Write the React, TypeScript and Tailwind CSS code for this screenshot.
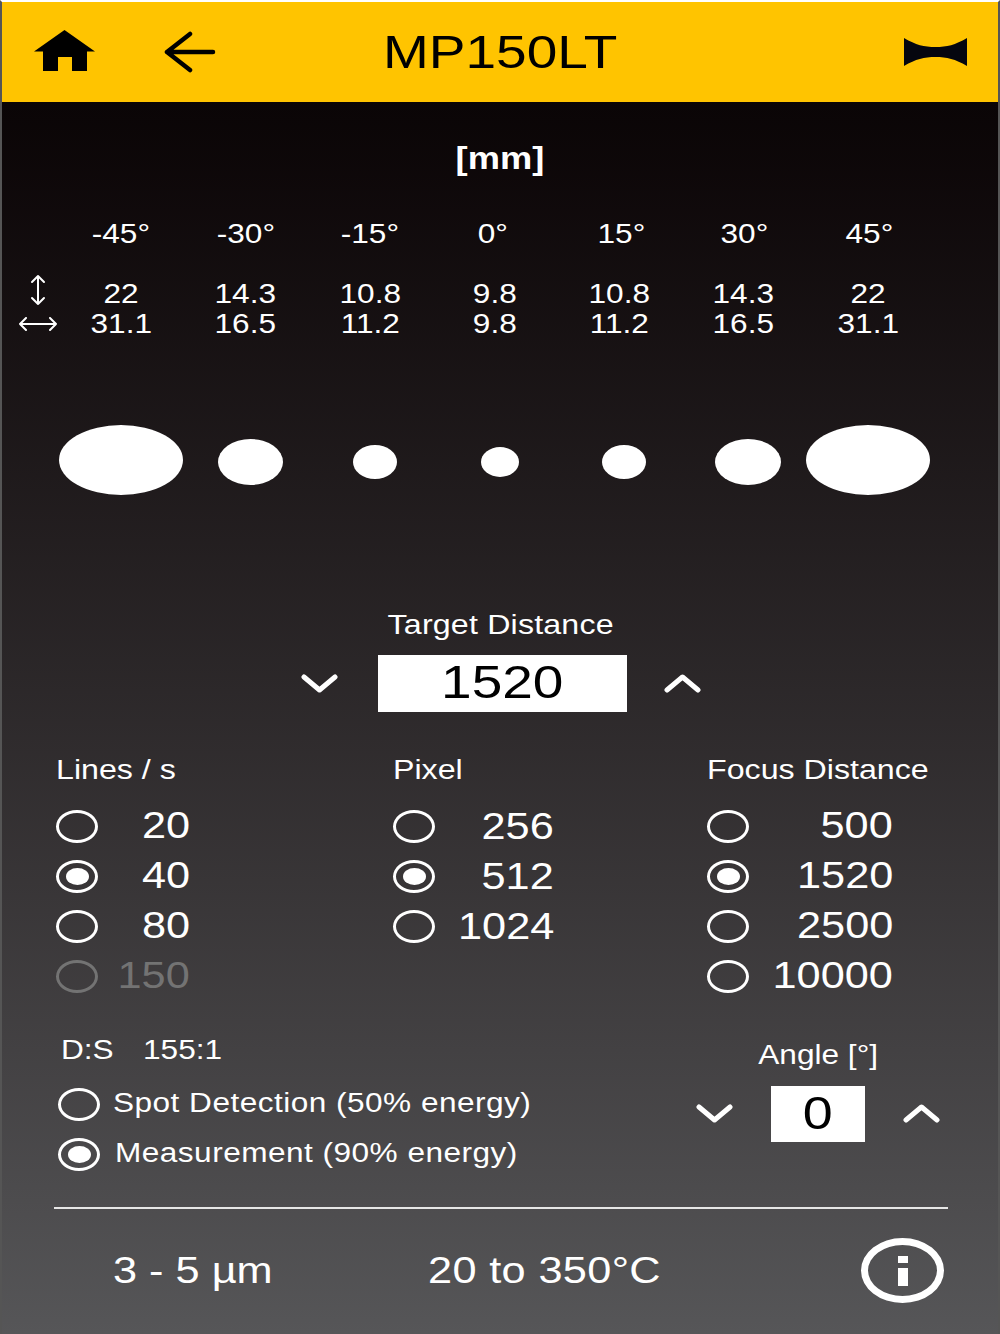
import type { ReactNode } from 'react'

const font = 'font-["Liberation_Sans",Arial,sans-serif]'

function Txt({ children, className = '' }: { children: ReactNode; className?: string }) {
  return <span className={`inline-block whitespace-nowrap scale-x-[1.17] ${className}`}>{children}</span>
}

function Radio({ checked, disabled }: { checked?: boolean; disabled?: boolean }) {
  return (
    <span
      className={`flex h-[33px] w-[42px] shrink-0 items-center justify-center rounded-[50%] border-[3.5px] ${
        disabled ? 'border-[#737373]' : 'border-white'
      }`}
    >
      {checked && <span className="h-[17px] w-[23px] rounded-[50%] bg-white" />}
    </span>
  )
}

function Chevron({ up }: { up?: boolean }) {
  return (
    <svg width="37" height="20" viewBox="0 0 37 20" className="shrink-0">
      <polyline
        points={up ? '3,16 18.5,3 34,16' : '3,3 18.5,16 34,3'}
        fill="none"
        stroke="white"
        strokeWidth="5"
        strokeLinecap="round"
        strokeLinejoin="round"
      />
    </svg>
  )
}

const angles = [
  { label: '-45°', nudge: '' },
  { label: '-30°', nudge: '' },
  { label: '-15°', nudge: '' },
  { label: '0°', nudge: '-translate-x-[2px]' },
  { label: '15°', nudge: 'translate-x-[2px]' },
  { label: '30°', nudge: 'translate-x-px' },
  { label: '45°', nudge: 'translate-x-px' },
]
const heights = ['22', '14.3', '10.8', '9.8', '10.8', '14.3', '22']
const widths = ['31.1', '16.5', '11.2', '9.8', '11.2', '16.5', '31.1']

function OptionColumn({
  title,
  items,
  valueWidth,
  raise,
}: {
  title: string
  items: { value: string; checked?: boolean; disabled?: boolean }[]
  valueWidth: string
  raise?: boolean
}) {
  return (
    <div>
      <div className="h-[30px] text-[27.5px] leading-[30px]">
        <Txt className="origin-left translate-y-px">{title}</Txt>
      </div>
      <div className="mt-[17px]">
        {items.map((item) => (
          <div key={item.value} className="flex h-[50px] items-center">
            <Radio checked={item.checked} disabled={item.disabled} />
            <div className={`${valueWidth} text-right text-[37px] leading-[40px] ${item.disabled ? 'text-[#737373]' : ''}`}>
              <Txt className={`origin-right ${raise ? '' : 'translate-y-px'}`}>{item.value}</Txt>
            </div>
          </div>
        ))}
      </div>
    </div>
  )
}

export default function App() {
  return (
    <div className={`${font} h-[1334px] w-[1000px] overflow-hidden border-x-2 border-t-2 border-x-[#555] border-t-white text-white`}>
      {/* Barre du haut */}
      <header className="grid h-[100px] grid-cols-[1fr_auto_1fr] items-center bg-[#ffc400] text-black">
        <div className="flex items-center pl-[32px]">
          <svg width="62" height="44" viewBox="0 0 62 44">
            <path d="M30.5 0 L61 21.5 H53 V41 H38 V27 H24 V41 H9 V21.5 H0 Z" fill="black" />
          </svg>
          <svg width="54" height="42" viewBox="0 0 54 42" className="ml-[68px]">
            <path d="M26 3 L3 21 L26 39 M3 21 H49" fill="none" stroke="black" strokeWidth="4.5" strokeLinecap="round" strokeLinejoin="round" />
          </svg>
        </div>
        <div className="text-[47px] leading-[50px]">
          <Txt>MP150LT</Txt>
        </div>
        <div className="flex justify-end pr-[31px]">
          <svg width="63" height="28" viewBox="0 0 63 28">
            <path d="M0 0 C12 7 20 9 31.5 9 C43 9 51 7 63 0 V28 C51 21 43 19 31.5 19 C20 19 12 21 0 28 Z" fill="#05060f" />
          </svg>
        </div>
      </header>

      <main className="h-[1232px] bg-gradient-to-b from-[#0a0506] to-[#565658]">
        <div className="pt-[37px] text-center text-[31px] font-bold leading-[40px]">
          <Txt>[mm]</Txt>
        </div>

        {/* Tableau des tailles de spot */}
        <div className="mt-[40px] grid grid-cols-[57px_repeat(7,124.5px)] text-center text-[27px] leading-[30px]">
          <div />
          {angles.map((a) => (
            <div key={a.label}>
              <Txt className={a.nudge}>{a.label}</Txt>
            </div>
          ))}
          <div className="mt-[30px] flex h-[30px] items-start justify-end pr-[9px]">
            <svg width="16" height="32" viewBox="0 0 16 32" className="-mt-[5px] mr-[4px]">
              <path d="M8 2 V30 M2 8 L8 2 L14 8 M2 24 L8 30 L14 24" fill="none" stroke="white" strokeWidth="2" strokeLinecap="round" strokeLinejoin="round" />
            </svg>
          </div>
          {heights.map((h, i) => (
            <div key={i} className="mt-[30px]">
              <Txt>{h}</Txt>
            </div>
          ))}
          <div className="flex h-[30px] items-center pl-[16px]">
            <svg width="40" height="14" viewBox="0 0 40 14">
              <path d="M2 7 H38 M8 1 L2 7 L8 13 M32 1 L38 7 L32 13" fill="none" stroke="white" strokeWidth="2" strokeLinecap="round" strokeLinejoin="round" />
            </svg>
          </div>
          {widths.map((w, i) => (
            <div key={i}>
              <Txt>{w}</Txt>
            </div>
          ))}
        </div>

        {/* Spots */}
        <div className="mt-[86px] flex h-[70px] items-center pl-[57px]">
          <div className="h-[70px] w-[124px] rounded-[50%] bg-white" />
          <div className="ml-[35px] mt-[4px] h-[46px] w-[65px] rounded-[50%] bg-white" />
          <div className="ml-[70px] mt-[3px] h-[34px] w-[44px] rounded-[50%] bg-white" />
          <div className="ml-[84px] mt-[4px] h-[30px] w-[38px] rounded-[50%] bg-white" />
          <div className="ml-[83px] mt-[3px] h-[34px] w-[44px] rounded-[50%] bg-white" />
          <div className="ml-[69px] mt-[4px] h-[46px] w-[66px] rounded-[50%] bg-white" />
          <div className="ml-[25px] h-[70px] w-[124px] rounded-[50%] bg-white" />
        </div>

        <div className="mt-[114px] pl-[2px] text-center text-[27.5px] leading-[30px] tracking-[0.15px]">
          <Txt className="translate-y-px">Target Distance</Txt>
        </div>

        <div className="mt-[16px] flex items-center pl-[299px]">
          <Chevron />
          <div className="ml-[40px] flex h-[57px] w-[249px] items-center justify-center bg-white text-[47px] leading-[50px] text-black">
            <Txt className="-translate-y-[2px]">1520</Txt>
          </div>
          <div className="ml-[37px]">
            <Chevron up />
          </div>
        </div>

        {/* Options */}
        <div className="mt-[42px] grid grid-cols-[337px_314px_1fr] pl-[54px]">
          <OptionColumn
            title="Lines / s"
            valueWidth="w-[92px]"
            raise
            items={[{ value: '20' }, { value: '40', checked: true }, { value: '80' }, { value: '150', disabled: true }]}
          />
          <OptionColumn
            title="Pixel"
            valueWidth="w-[119px]"
            items={[{ value: '256' }, { value: '512', checked: true }, { value: '1024' }]}
          />
          <OptionColumn
            title="Focus Distance"
            valueWidth="w-[144px]"
            raise
            items={[{ value: '500' }, { value: '1520', checked: true }, { value: '2500' }, { value: '10000' }]}
          />
        </div>

        <div className="mt-[34px] flex">
          <div className="pl-[56px]">
            <div className="flex h-[30px] pl-[3px] text-[27px] leading-[30px]">
              <div className="w-[82px]">
                <Txt className="origin-left">D:S</Txt>
              </div>
              <Txt className="origin-left">155:1</Txt>
            </div>
            <div className="mt-[14px] flex h-[50px] items-center">
              <Radio />
              <div className="ml-[13px] text-[27px] leading-[30px] tracking-[0.4px]">
                <Txt className="origin-left -translate-y-px">Spot Detection (50% energy)</Txt>
              </div>
            </div>
            <div className="flex h-[50px] items-center">
              <Radio checked />
              <div className="ml-[15px] text-[27px] leading-[30px] tracking-[0.4px]">
                <Txt className="origin-left -translate-y-px">Measurement (90% energy)</Txt>
              </div>
            </div>
          </div>
          <div className="ml-auto mr-[58px] flex flex-col items-center pt-[5px]">
            <div className="text-[27px] leading-[30px]">
              <Txt>Angle [°]</Txt>
            </div>
            <div className="mt-[16px] flex items-center gap-[38px]">
              <Chevron />
              <div className="flex h-[56px] w-[94px] items-center justify-center bg-white text-[46px] leading-[50px] text-black">
                <Txt className="-translate-y-px">0</Txt>
              </div>
              <Chevron up />
            </div>
          </div>
        </div>

        <div className="ml-[52px] mt-[28px] h-[2px] w-[894px] bg-[#e6e6e6]" />

        <div className="mt-[29px] flex h-[65px] items-center pl-[111px] pr-[54px] text-[37px] leading-[40px]">
          <div className="w-[315px]">
            <Txt className="origin-left">3 - 5 µm</Txt>
          </div>
          <Txt className="origin-left tracking-[0.3px]">20 to 350°C</Txt>
          <div className="relative ml-auto flex h-[65px] w-[83px] items-center justify-center rounded-[50%] border-[7px] border-white">
            <div className="flex flex-col items-center gap-[5px]">
              <div className="h-[7px] w-[10px] bg-white" />
              <div className="h-[18px] w-[10px] bg-white" />
            </div>
          </div>
        </div>
      </main>
    </div>
  )
}
